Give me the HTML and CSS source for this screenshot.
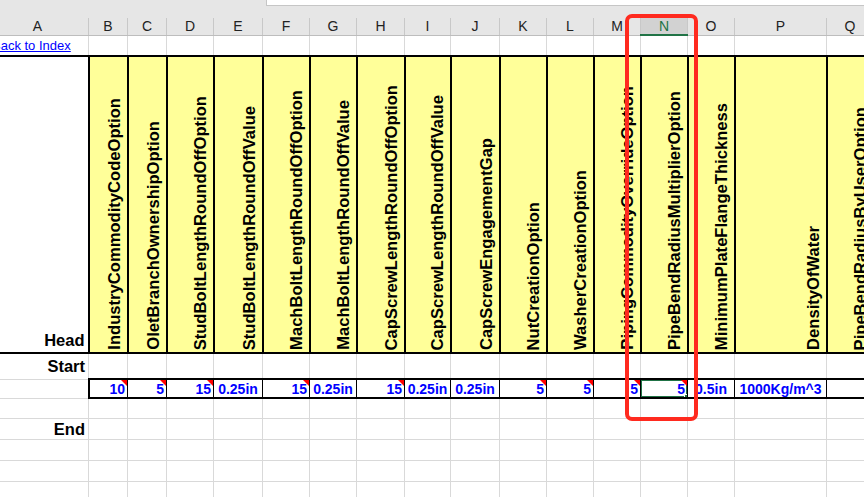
FILE: index.html
```html
<!DOCTYPE html>
<html>

<head>
  <meta charset="utf-8">
  <title>Settings sheet</title>
  <link rel="stylesheet" href="styles.css">
</head>

<body>
  <div class="sheet">
    <div class="ribbon-edge">
      <div class="formula-box"></div>
    </div>

    <table class="grid">
      <colgroup>
        <col class="w-a">
        <col class="w-narrow">
        <col class="w-narrow">
        <col class="w-47">
        <col class="w-49">
        <col class="w-47">
        <col class="w-47">
        <col class="w-48">
        <col class="w-46">
        <col class="w-49">
        <col class="w-47">
        <col class="w-47">
        <col class="w-47">
        <col class="w-47">
        <col class="w-47">
        <col class="w-wide">
        <col class="w-47">
      </colgroup>

      <tr class="col-heads">
        <th>A</th><th>B</th><th>C</th><th>D</th><th>E</th><th>F</th><th>G</th><th>H</th><th>I</th>
        <th>J</th><th>K</th><th>L</th><th>M</th><th class="selected">N</th><th>O</th><th>P</th><th>Q</th>
      </tr>

      <tr class="r-link">
        <td class="link-cell"><a href="#index">Back to Index</a></td>
        <td></td><td></td><td></td><td></td><td></td><td></td><td></td><td></td>
        <td></td><td></td><td></td><td></td><td></td><td></td><td></td><td></td>
      </tr>

      <tr class="r-head">
        <td class="label">Head</td>
        <td class="field"><div class="field-wrap"><span class="field-name">IndustryCommodityCodeOption</span></div></td>
        <td class="field"><div class="field-wrap"><span class="field-name">OletBranchOwnershipOption</span></div></td>
        <td class="field"><div class="field-wrap"><span class="field-name">StudBoltLengthRoundOffOption</span></div></td>
        <td class="field"><div class="field-wrap"><span class="field-name">StudBoltLengthRoundOffValue</span></div></td>
        <td class="field"><div class="field-wrap"><span class="field-name">MachBoltLengthRoundOffOption</span></div></td>
        <td class="field"><div class="field-wrap"><span class="field-name">MachBoltLengthRoundOffValue</span></div></td>
        <td class="field"><div class="field-wrap"><span class="field-name">CapScrewLengthRoundOffOption</span></div></td>
        <td class="field"><div class="field-wrap"><span class="field-name">CapScrewLengthRoundOffValue</span></div></td>
        <td class="field"><div class="field-wrap"><span class="field-name">CapScrewEngagementGap</span></div></td>
        <td class="field"><div class="field-wrap"><span class="field-name">NutCreationOption</span></div></td>
        <td class="field"><div class="field-wrap"><span class="field-name">WasherCreationOption</span></div></td>
        <td class="field"><div class="field-wrap"><span class="field-name">PipingCommodityOverrideOption</span></div></td>
        <td class="field"><div class="field-wrap"><span class="field-name">PipeBendRadiusMultiplierOption</span></div></td>
        <td class="field"><div class="field-wrap"><span class="field-name">MinimumPlateFlangeThickness</span></div></td>
        <td class="field"><div class="field-wrap"><span class="field-name">DensityOfWater</span></div></td>
        <td class="field"><div class="field-wrap"><span class="field-name">PipeBendRadiusByUserOption</span></div></td>
      </tr>

      <tr class="r-start">
        <td class="label">Start</td>
        <td></td><td></td><td></td><td></td><td></td><td></td><td></td><td></td>
        <td></td><td></td><td></td><td></td><td></td><td></td><td></td><td></td>
      </tr>

      <tr class="r-values">
        <td class="gap"></td>
        <td class="num note first">10</td>
        <td class="num note">5</td>
        <td class="num note">15</td>
        <td>0.25in</td>
        <td class="num note">15</td>
        <td>0.25in</td>
        <td class="num note">15</td>
        <td>0.25in</td>
        <td>0.25in</td>
        <td class="num note">5</td>
        <td class="num note">5</td>
        <td class="num note">5</td>
        <td class="num note active">5<span class="sel-frame"></span><span class="sel-handle"></span></td>
        <td>0.5in</td>
        <td>1000Kg/m^3</td>
        <td></td>
      </tr>

      <tr class="r-plain">
        <td></td><td></td><td></td><td></td><td></td><td></td><td></td><td></td><td></td>
        <td></td><td></td><td></td><td></td><td></td><td></td><td></td><td></td>
      </tr>

      <tr class="r-end">
        <td class="label">End</td>
        <td></td><td></td><td></td><td></td><td></td><td></td><td></td><td></td>
        <td></td><td></td><td></td><td></td><td></td><td></td><td></td><td></td>
      </tr>

      <tr class="r-plain tall">
        <td></td><td></td><td></td><td></td><td></td><td></td><td></td><td></td><td></td>
        <td></td><td></td><td></td><td></td><td></td><td></td><td></td><td></td>
      </tr>

      <tr class="r-plain tall">
        <td></td><td></td><td></td><td></td><td></td><td></td><td></td><td></td><td></td>
        <td></td><td></td><td></td><td></td><td></td><td></td><td></td><td></td>
      </tr>

      <tr class="r-plain tall">
        <td></td><td></td><td></td><td></td><td></td><td></td><td></td><td></td><td></td>
        <td></td><td></td><td></td><td></td><td></td><td></td><td></td><td></td>
      </tr>
    </table>

    <!-- highlight drawn round column N -->
    <div class="callout"></div>
  </div>
</body>

</html>
```

FILE: styles.css
```css
body {
  margin: 0;
  background: #fff;
  font-family: "Liberation Sans", Arial, sans-serif;
  overflow: hidden;
}

.sheet {
  position: relative;
  width: 864px;
  height: 497px;
  overflow: hidden;
}

.ribbon-edge {
  height: 18px;
  background: #e6e6e6;
}

.formula-box {
  margin-left: 266px;
  height: 5px;
  background: #fff;
  border-left: 1px solid #c6c6c6;
  border-bottom: 1px solid #c6c6c6;
}

/* column widths, A is partly scrolled off to the left */
.w-a { width: 102px; }
.w-narrow { width: 39px; }
.w-46 { width: 46px; }
.w-47 { width: 47px; }
.w-48 { width: 48px; }
.w-49 { width: 49px; }
.w-wide { width: 92px; }

.grid {
  border-collapse: collapse;
  table-layout: fixed;
  width: 887px;
  margin-left: -14px;
}

.grid td {
  border: 1px solid #d9d9d9;
  padding: 0 3px;
  white-space: nowrap;
  overflow: hidden;
}

.col-heads th {
  height: 16px;
  padding: 0;
  background: #e6e6e6;
  color: #222;
  font-size: 14px;
  font-weight: normal;
  border-left: 1px solid #c8c8c8;
  border-right: 1px solid #c8c8c8;
  border-bottom: 1px solid #bdbdbd;
}

.col-heads th.selected {
  background: #d2d2d2;
  color: #217346;
  border-bottom: 2px solid #217346;
}

.r-link td {
  height: 19px;
}

.link-cell {
  font-size: 13px;
}

.link-cell a {
  color: #0000ff;
  padding-left: 2px;
}

.label {
  text-align: right;
  font-weight: bold;
  font-size: 16.5px;
  color: #000;
}

/* rotated field names */
.r-head td {
  height: 293px;
  vertical-align: bottom;
  border: 2px solid #000;
  background: #ffff99;
  padding: 0 3px 0 0;
}

.r-head td.label {
  background: #fff;
  border-left: 0;
  padding-bottom: 2px;
}

.field-wrap {
  height: 291px;
  display: flex;
  justify-content: flex-end;
  align-items: flex-end;
}

.field-name {
  writing-mode: vertical-rl;
  transform: rotate(180deg);
  font-weight: bold;
  font-size: 16.6px;
  line-height: 18px;
  padding-top: 2px;
  color: #000;
}

.r-start td {
  height: 24px;
}

.r-values td {
  height: 17px;
  position: relative;
  border: 1px solid #000;
  border-top: 2px solid #000;
  border-bottom: 2px solid #000;
  color: #0000ff;
  font-weight: bold;
  font-size: 14px;
  text-align: center;
  padding: 0 2px;
}

.r-values td.gap {
  border: 1px solid #d9d9d9;
  border-right: 2px solid #000;
}

.r-values td.first {
  border-left: 2px solid #000;
}

.r-values td.num {
  text-align: right;
}

/* comment marker in the top right corner */
.note::after {
  content: "";
  position: absolute;
  top: 0;
  right: 0;
  border-top: 6px solid #ff0000;
  border-left: 6px solid transparent;
}

.sel-frame {
  position: absolute;
  left: -1px;
  top: -1px;
  right: -1px;
  bottom: -1px;
  border: 2px solid #217346;
}

.sel-handle {
  position: absolute;
  right: -4px;
  bottom: -4px;
  width: 5px;
  height: 5px;
  background: #217346;
  border: 1px solid #fff;
}

.r-plain td {
  height: 19px;
}

.r-end td {
  height: 20px;
}

.r-plain.tall td {
  height: 20px;
}

.callout {
  position: absolute;
  left: 625px;
  top: 14px;
  width: 73px;
  height: 407px;
  box-sizing: border-box;
  border: 4px solid #ff2a1f;
  border-radius: 7px;
}
```
